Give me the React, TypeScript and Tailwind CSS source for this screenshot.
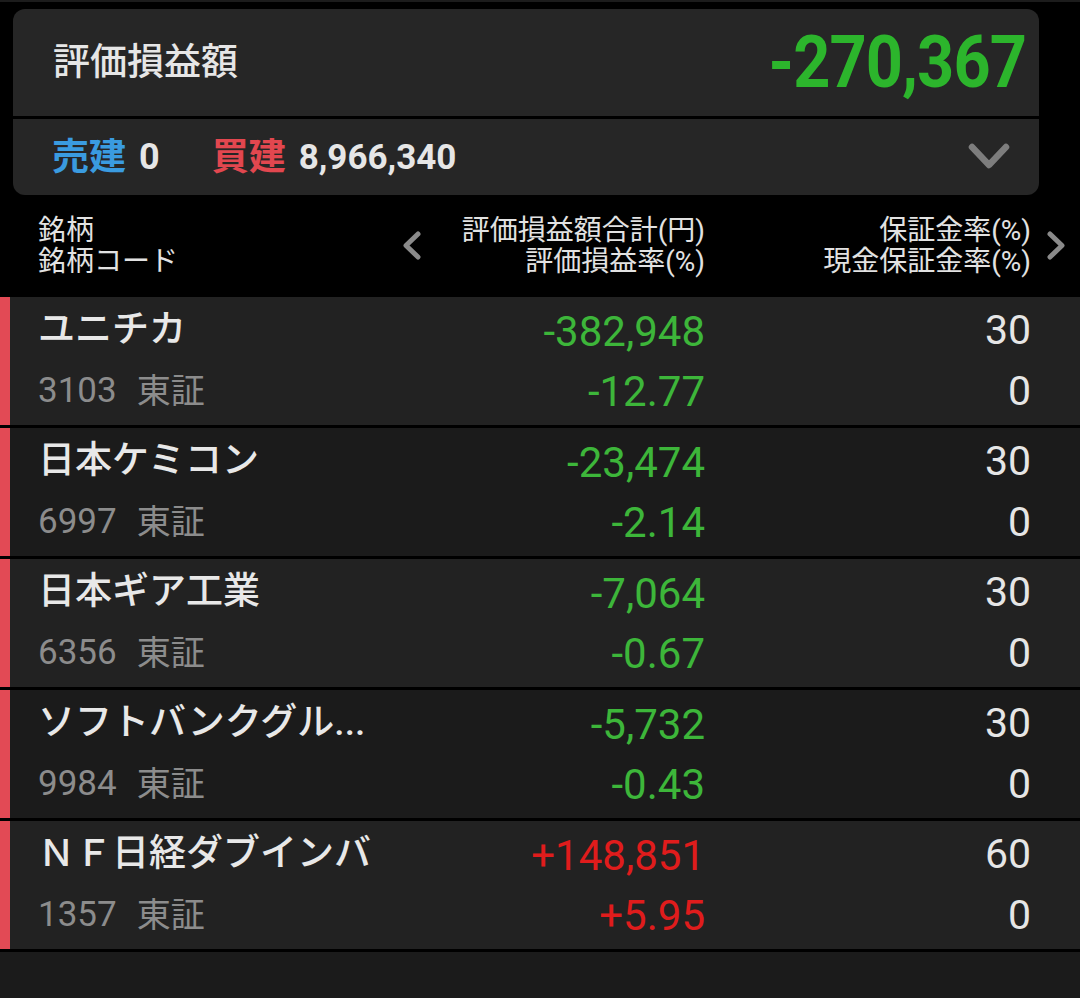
import React from "react";

const JP = "font-['Roboto','Noto_Sans_CJK_JP',sans-serif]";

type Row = {
  name: string;
  code: string;
  pl: string;
  rate: string;
  up: boolean;
  margin: string;
  cash: string;
};

const rows: Row[] = [
  { name: "ユニチカ", code: "3103", pl: "-382,948", rate: "-12.77", up: false, margin: "30", cash: "0" },
  { name: "日本ケミコン", code: "6997", pl: "-23,474", rate: "-2.14", up: false, margin: "30", cash: "0" },
  { name: "日本ギア工業", code: "6356", pl: "-7,064", rate: "-0.67", up: false, margin: "30", cash: "0" },
  { name: "ソフトバンクグル...", code: "9984", pl: "-5,732", rate: "-0.43", up: false, margin: "30", cash: "0" },
  { name: "ＮＦ日経ダブインバ", code: "1357", pl: "+148,851", rate: "+5.95", up: true, margin: "60", cash: "0" },
];

function Chevron({ dir, className }: { dir: "left" | "right" | "down"; className?: string }) {
  if (dir === "down") {
    return (
      <svg width="42" height="28" viewBox="0 0 42 28" className={className}>
        <polyline points="4,4 21,22 38,4" fill="none" stroke="#7d7d7d" strokeWidth="6.5" strokeLinecap="round" strokeLinejoin="round" />
      </svg>
    );
  }
  const pts = dir === "left" ? "15,3 3,14.5 15,26" : "3,3 15,14.5 3,26";
  return (
    <svg width="18" height="30" viewBox="0 0 18 30" className={className}>
      <polyline points={pts} fill="none" stroke="#8a8a8a" strokeWidth="5" strokeLinecap="round" strokeLinejoin="round" />
    </svg>
  );
}

export default function App() {
  return (
    <div className={`w-[1080px] h-[998px] bg-black overflow-hidden flex flex-col ${JP}`}>
      <div className="h-[2px] bg-[#1c1c1c]" />
      {/* summary card */}
      <div className="mt-[7px] ml-[13px] w-[1026px] rounded-[12px] bg-[#262626] overflow-hidden">
        <div className="h-[107px] flex items-center justify-between pl-[40px] pr-[13px]">
          <span className="text-[37px] font-medium text-[#e6e6e6] leading-none">評価損益額</span>
          <span className="font-['Roboto',sans-serif] text-[72px] font-bold tracking-[-1px] scale-x-[0.9] origin-right text-[#2cb52c] leading-none">
            -270,367
          </span>
        </div>
        <div className="h-[3px] bg-black" />
        <div className="h-[76px] flex items-center pl-[39px] pr-[29px]">
          <span className="text-[37px] font-bold text-[#3a9be0] leading-none">売建</span>
          <span className="ml-[13px] font-['Roboto',sans-serif] text-[36px] font-bold text-[#e6e6e6] leading-none">0</span>
          <span className="ml-[52px] text-[37px] font-bold text-[#e2474f] leading-none">買建</span>
          <span className="ml-[13px] font-['Roboto',sans-serif] text-[35px] font-bold text-[#e6e6e6] leading-none">8,966,340</span>
          <Chevron dir="down" className="ml-auto" />
        </div>
      </div>

      {/* table header */}
      <div className="h-[102px] flex items-center pl-[38px] text-[28px] leading-[31px] text-[#e2e2e2]">
        <div className="w-[352px]">
          <div>銘柄</div>
          <div>銘柄コード</div>
        </div>
        <div className="w-[315px] flex items-center pl-[13px]">
          <Chevron dir="left" />
          <div className="ml-auto text-right">
            <div>評価損益額合計(円)</div>
            <div>評価損益率(%)</div>
          </div>
        </div>
        <div className="w-[326px] text-right">
          <div>保証金率(%)</div>
          <div>現金保証金率(%)</div>
        </div>
        <Chevron dir="right" className="ml-[16px]" />
      </div>

      {/* rows */}
      {rows.map((r, i) => (
        <div key={r.code} className={`flex h-[131px] border-b-[3px] border-black ${i % 2 === 0 ? "bg-[#222222]" : "bg-[#1b1b1b]"}`}>
          <div className="w-[10px] bg-[#e24a55]" />
          <div className="flex-1 pl-[28px] pt-[4px] grid grid-cols-[352px_315px_326px] grid-rows-[60px_61px]">
            <div className="flex items-center pb-[3px] text-[37px] font-medium text-[#e8e8e8] whitespace-nowrap overflow-hidden">
              {r.name}
            </div>
            <div className={`flex items-center justify-end font-['Roboto',sans-serif] text-[42px] ${r.up ? "text-[#e01c1c]" : "text-[#3db63a]"}`}>
              {r.pl}
            </div>
            <div className="flex items-center justify-end font-['Roboto',sans-serif] text-[41px] text-[#e6e6e6]">
              {r.margin}
            </div>
            <div className="flex items-center text-[#8c8c8c]">
              <span className="font-['Roboto',sans-serif] text-[35px]">{r.code}</span>
              <span className="ml-[20px] text-[34px]">東証</span>
            </div>
            <div className={`flex items-center justify-end font-['Roboto',sans-serif] text-[42px] ${r.up ? "text-[#e01c1c]" : "text-[#3db63a]"}`}>
              {r.rate}
            </div>
            <div className="flex items-center justify-end font-['Roboto',sans-serif] text-[41px] text-[#e6e6e6]">
              {r.cash}
            </div>
          </div>
        </div>
      ))}
      <div className="flex-1 bg-[#1b1b1b]" />
    </div>
  );
}
